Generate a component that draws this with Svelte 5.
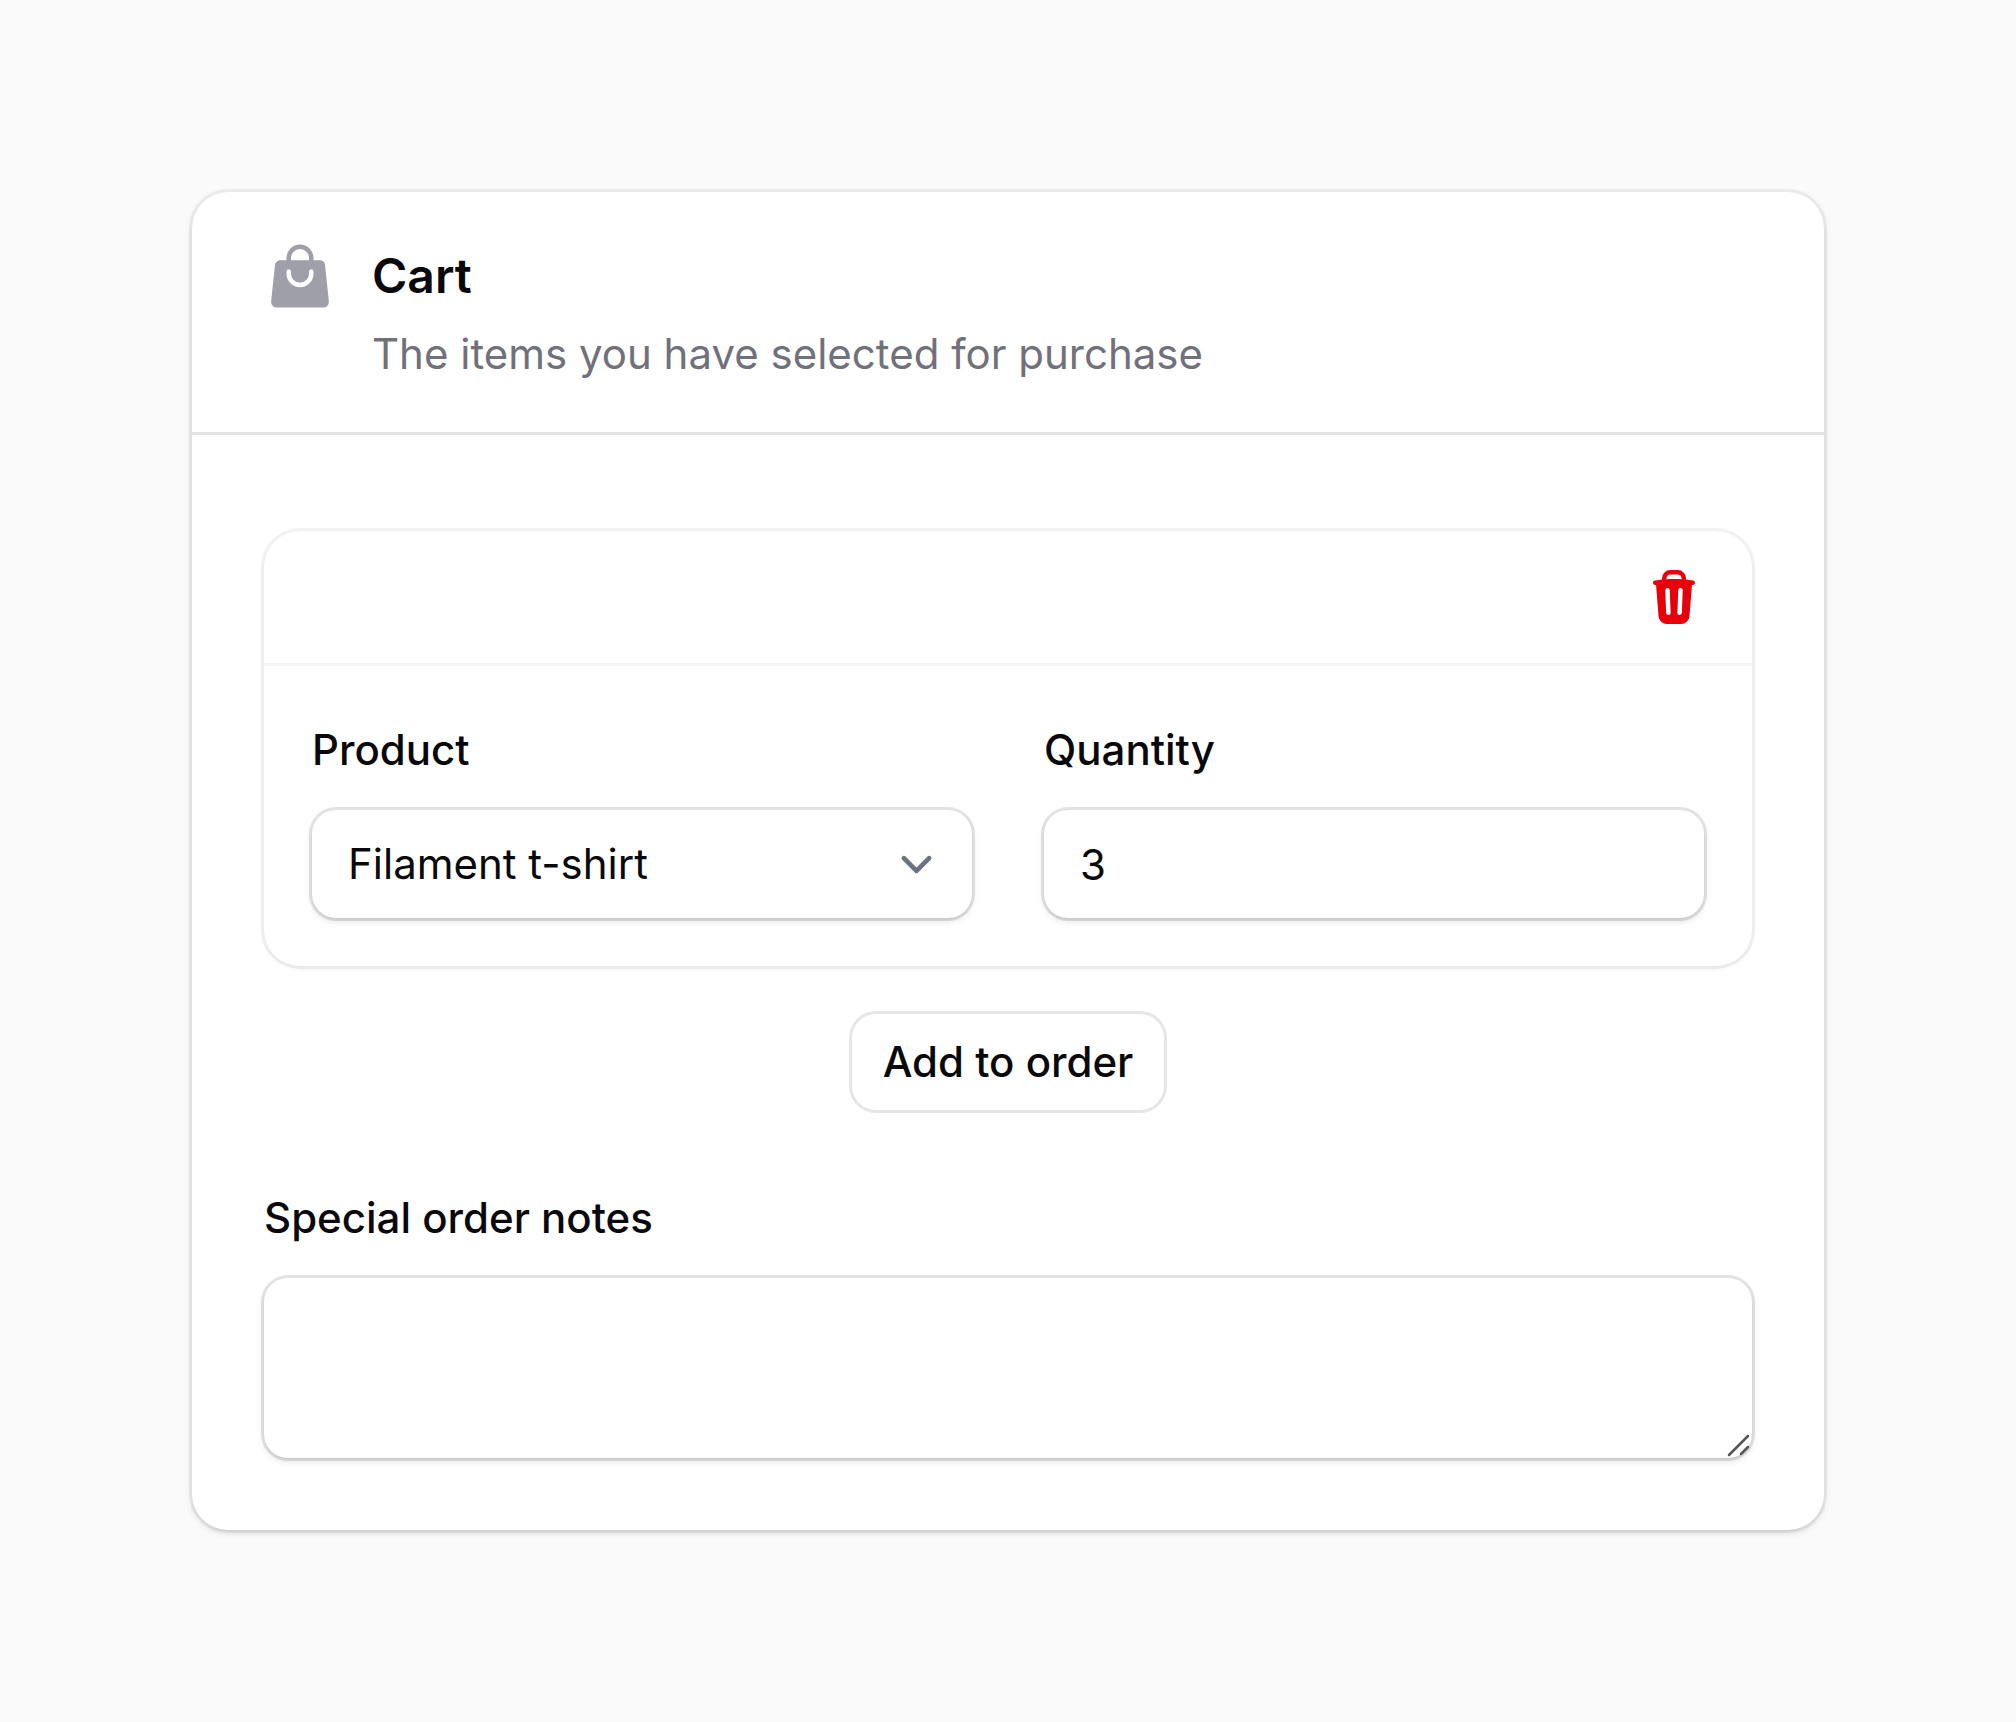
<script lang="ts">
  let product = $state('t-shirt');
  let quantity = $state('3');
  let notes = $state('');
</script>

<main>
  <section class="card">
    <header class="card-header">
      <svg class="bag" viewBox="0 0 24 24" fill="currentColor" aria-hidden="true">
        <path
          fill-rule="evenodd"
          clip-rule="evenodd"
          d="M7.5 6v.75H5.513c-.96 0-1.764.724-1.865 1.679l-1.263 12A1.875 1.875 0 0 0 4.25 22.5h15.5a1.875 1.875 0 0 0 1.865-2.071l-1.263-12a1.875 1.875 0 0 0-1.865-1.679H16.5V6a4.5 4.5 0 1 0-9 0ZM12 3a3 3 0 0 0-3 3v.75h6V6a3 3 0 0 0-3-3Zm-3 8.25a3 3 0 1 0 6 0v-.75a.75.75 0 0 1 1.5 0v.75a4.5 4.5 0 1 1-9 0v-.75a.75.75 0 0 1 1.5 0v.75Z"
        />
      </svg>
      <div class="heading">
        <h2>Cart</h2>
        <p>The items you have selected for purchase</p>
      </div>
    </header>

    <form class="card-body">
      <div class="repeater">
        <div class="item">
          <div class="item-header">
            <button type="button" class="delete" aria-label="Delete">
              <svg viewBox="0 0 20 20" fill="currentColor" aria-hidden="true">
                <path
                  fill-rule="evenodd"
                  clip-rule="evenodd"
                  d="M8.75 1A2.75 2.75 0 0 0 6 3.75v.443c-.795.077-1.584.176-2.365.298a.75.75 0 1 0 .23 1.482l.149-.022.841 10.518A2.75 2.75 0 0 0 7.596 19h4.807a2.75 2.75 0 0 0 2.742-2.53l.841-10.52.149.023a.75.75 0 0 0 .23-1.482A41.03 41.03 0 0 0 14 4.193V3.75A2.75 2.75 0 0 0 11.25 1h-2.5ZM10 4c.84 0 1.673.025 2.5.075V3.75c0-.69-.56-1.25-1.25-1.25h-2.5c-.69 0-1.25.56-1.25 1.25v.325C8.327 4.025 9.16 4 10 4ZM8.58 7.72a.75.75 0 0 0-1.5.06l.3 7.5a.75.75 0 1 0 1.5-.06l-.3-7.5Zm4.34.06a.75.75 0 1 0-1.5-.06l-.3 7.5a.75.75 0 1 0 1.5.06l.3-7.5Z"
                />
              </svg>
            </button>
          </div>
          <div class="item-fields">
            <div class="field">
              <label for="product">Product</label>
              <div class="control">
                <select id="product" bind:value={product}>
                  <option value="t-shirt">Filament t-shirt</option>
                </select>
                <svg class="chevron" viewBox="0 0 20 20" fill="none" aria-hidden="true">
                  <path d="m6 8 4 4 4-4" stroke="currentColor" stroke-width="1.5" stroke-linecap="round" stroke-linejoin="round" />
                </svg>
              </div>
            </div>
            <div class="field">
              <label for="quantity">Quantity</label>
              <div class="control">
                <input id="quantity" type="text" inputmode="numeric" bind:value={quantity} />
              </div>
            </div>
          </div>
        </div>
        <button type="button" class="add">Add to order</button>
      </div>

      <div class="field">
        <label for="notes">Special order notes</label>
        <div class="control">
          <textarea id="notes" bind:value={notes}></textarea>
          <svg class="grip" viewBox="0 0 24 24" fill="none" aria-hidden="true">
            <path d="M2 22 21 3M14 21l7-7" stroke="currentColor" stroke-width="2.5" stroke-linecap="round" />
          </svg>
        </div>
      </div>
    </form>
  </section>
</main>

<style>
  :global(body) {
    background: #fafafa;
  }

  main {
    padding: 192px;
    font-family: Inter, 'Liberation Sans', sans-serif;
    font-size: 42px;
    line-height: 60px;
    color: #09090b;
  }

  .card {
    border-radius: 36px;
    background: #fff;
    box-shadow:
      0 0 0 3px rgba(9, 9, 11, 0.05),
      0 3px 9px rgba(0, 0, 0, 0.1),
      0 3px 6px -3px rgba(0, 0, 0, 0.1);
  }

  .card-header {
    display: flex;
    gap: 36px;
    padding: 48px 72px;
  }

  .bag {
    flex: none;
    width: 72px;
    height: 72px;
    color: #9f9fa9;
  }

  .heading {
    display: grid;
    gap: 12px;
  }

  h2,
  p {
    margin: 0;
  }

  h2 {
    font-size: 48px;
    line-height: 72px;
    font-weight: 600;
  }

  p {
    color: #71717b;
  }

  .card-body {
    display: grid;
    gap: 72px;
    padding: 96px 72px 72px;
    border-top: 3px solid #e4e4e4;
  }

  .repeater {
    display: grid;
    gap: 48px;
    justify-items: center;
  }

  .item {
    width: 100%;
    border-radius: 36px;
    background: #fff;
    box-shadow:
      0 0 0 3px rgba(9, 9, 11, 0.05),
      0 3px 6px rgba(0, 0, 0, 0.05);
  }

  .item-header {
    display: flex;
    justify-content: flex-end;
    padding: 36px 48px;
  }

  .item-fields {
    display: grid;
    grid-template-columns: 1fr 1fr;
    gap: 72px;
    padding: 48px;
    border-top: 3px solid #f4f4f4;
  }

  .field {
    display: grid;
    gap: 24px;
    min-width: 0;
  }

  label {
    line-height: 72px;
    font-weight: 500;
  }

  .control {
    position: relative;
    display: grid;
    border-radius: 24px;
    background: #fff;
    box-shadow:
      0 0 0 3px rgba(9, 9, 11, 0.1),
      0 3px 9px rgba(0, 0, 0, 0.1),
      0 3px 6px -3px rgba(0, 0, 0, 0.1);
  }

  input,
  select,
  textarea {
    box-sizing: border-box;
    width: 100%;
    min-width: 0;
    margin: 0;
    padding: 18px 36px;
    border: 0;
    border-radius: 24px;
    outline: 0;
    background: transparent;
    color: inherit;
    font: inherit;
    appearance: none;
  }

  input,
  select {
    height: 108px;
  }

  textarea {
    height: 180px;
    resize: none;
  }

  .chevron {
    position: absolute;
    top: 0;
    bottom: 0;
    right: 24px;
    width: 63px;
    height: 63px;
    margin: auto 0;
    color: #6b7280;
    pointer-events: none;
  }

  .grip {
    position: absolute;
    right: 1px;
    bottom: 1px;
    width: 24px;
    height: 24px;
    color: #555;
    pointer-events: none;
  }

  button {
    margin: 0;
    border: 0;
    background: transparent;
    font: inherit;
    cursor: pointer;
  }

  .delete {
    display: block;
    width: 60px;
    height: 60px;
    padding: 0;
    color: #e7000b;
  }

  .delete svg {
    display: block;
  }

  .add {
    padding: 18px 31px;
    border-radius: 24px;
    background: #fff;
    color: #09090b;
    font-weight: 500;
    box-shadow: 0 0 0 3px rgba(9, 9, 11, 0.1);
  }
</style>
